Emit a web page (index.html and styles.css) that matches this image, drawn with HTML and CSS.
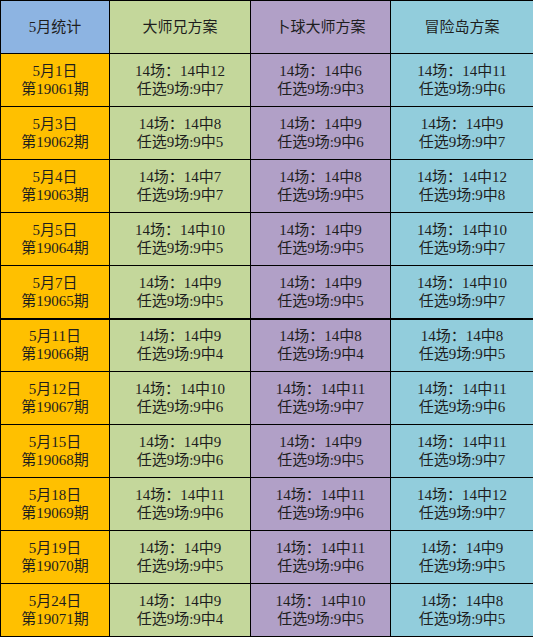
FILE: index.html
```html
<!DOCTYPE html>
<html lang="zh">
<head>
<meta charset="utf-8">
<link rel="stylesheet" href="styles.css">
</head>
<body>
<table class="stats">
  <colgroup>
    <col class="c1"><col class="c2"><col class="c3"><col class="c4">
  </colgroup>
  <thead>
    <tr>
      <th class="h-date">5月统计</th>
      <th class="green">大师兄方案</th>
      <th class="purple split">卜球大师方案</th>
      <th class="teal">冒险岛方案</th>
    </tr>
  </thead>
  <tbody>
    <tr>
      <td class="date">5月1日<br>第19061期</td>
      <td class="green">14场：14中12<br>任选9场:9中7</td>
      <td class="purple split">14场：14中6<br>任选9场:9中3</td>
      <td class="teal">14场：14中11<br>任选9场:9中6</td>
    </tr>
    <tr>
      <td class="date">5月3日<br>第19062期</td>
      <td class="green">14场：14中8<br>任选9场:9中5</td>
      <td class="purple split">14场：14中9<br>任选9场:9中6</td>
      <td class="teal">14场：14中9<br>任选9场:9中7</td>
    </tr>
    <tr>
      <td class="date">5月4日<br>第19063期</td>
      <td class="green">14场：14中7<br>任选9场:9中7</td>
      <td class="purple split">14场：14中8<br>任选9场:9中5</td>
      <td class="teal">14场：14中12<br>任选9场:9中8</td>
    </tr>
    <tr>
      <td class="date">5月5日<br>第19064期</td>
      <td class="green">14场：14中10<br>任选9场:9中5</td>
      <td class="purple split">14场：14中9<br>任选9场:9中5</td>
      <td class="teal">14场：14中10<br>任选9场:9中7</td>
    </tr>
    <tr>
      <td class="date">5月7日<br>第19065期</td>
      <td class="green">14场：14中9<br>任选9场:9中5</td>
      <td class="purple split">14场：14中9<br>任选9场:9中5</td>
      <td class="teal">14场：14中10<br>任选9场:9中7</td>
    </tr>
    <tr class="thick">
      <td class="date">5月11日<br>第19066期</td>
      <td class="green">14场：14中9<br>任选9场:9中4</td>
      <td class="purple split">14场：14中8<br>任选9场:9中4</td>
      <td class="teal">14场：14中8<br>任选9场:9中5</td>
    </tr>
    <tr>
      <td class="date">5月12日<br>第19067期</td>
      <td class="green">14场：14中10<br>任选9场:9中6</td>
      <td class="purple split">14场：14中11<br>任选9场:9中7</td>
      <td class="teal">14场：14中11<br>任选9场:9中6</td>
    </tr>
    <tr>
      <td class="date">5月15日<br>第19068期</td>
      <td class="green">14场：14中9<br>任选9场:9中6</td>
      <td class="purple split">14场：14中9<br>任选9场:9中5</td>
      <td class="teal">14场：14中11<br>任选9场:9中7</td>
    </tr>
    <tr>
      <td class="date">5月18日<br>第19069期</td>
      <td class="green">14场：14中11<br>任选9场:9中6</td>
      <td class="purple split">14场：14中11<br>任选9场:9中6</td>
      <td class="teal">14场：14中12<br>任选9场:9中7</td>
    </tr>
    <tr>
      <td class="date">5月19日<br>第19070期</td>
      <td class="green">14场：14中9<br>任选9场:9中5</td>
      <td class="purple split">14场：14中11<br>任选9场:9中6</td>
      <td class="teal">14场：14中9<br>任选9场:9中5</td>
    </tr>
    <tr>
      <td class="date">5月24日<br>第19071期</td>
      <td class="green">14场：14中9<br>任选9场:9中4</td>
      <td class="purple split">14场：14中10<br>任选9场:9中5</td>
      <td class="teal">14场：14中8<br>任选9场:9中5</td>
    </tr>
  </tbody>
</table>
</body>
</html>
```
FILE: styles.css
```css
html, body {
  margin: 0;
  padding: 0;
  background: #ffffff;
}

.stats {
  border-collapse: collapse;
  table-layout: fixed;
  width: 533px;
  font-family: "Liberation Serif", "Noto Sans CJK SC", serif;
  font-size: 15px;
  line-height: 18px;
  color: #1e1e1e;
}

.c1 { width: 109px; }
.c2 { width: 141px; }
.c3 { width: 140px; }
.c4 { width: 143px; }

.stats tr {
  height: 53px;
}

.stats th,
.stats td {
  border: 1px solid #000;
  padding: 0;
  text-align: center;
  vertical-align: middle;
  font-weight: normal;
}

.h-date { background: #8db4e2; }
.date { background: #ffc000; }
.green { background: #c4d79b; }
.purple { background: #b1a0c7; }
.teal { background: #92cddc; }

.split {
  border-left-width: 2px;
}

.thick td {
  border-top-width: 2px;
}
```
